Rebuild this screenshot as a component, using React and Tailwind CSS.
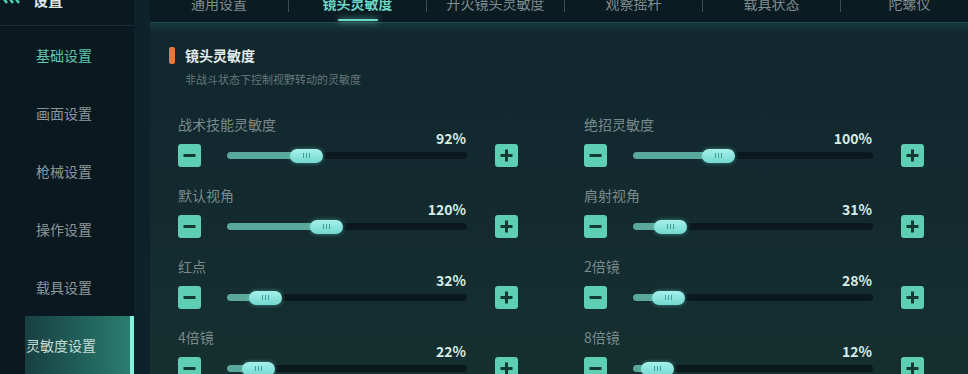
import React from 'react';

const tabs = ['通用设置', '镜头灵敏度', '开火镜头灵敏度', '观察摇杆', '载具状态', '陀螺仪'];
const menu = ['基础设置', '画面设置', '枪械设置', '操作设置', '载具设置', '灵敏度设置'];

const rows = [
    { label: '战术技能灵敏度', value: 92 },
    { label: '绝招灵敏度', value: 100 },
    { label: '默认视角', value: 120 },
    { label: '肩射视角', value: 31 },
    { label: '红点', value: 32 },
    { label: '2倍镜', value: 28 },
    { label: '4倍镜', value: 22 },
    { label: '8倍镜', value: 12 },
];

function StepButton({ plus }) {
    return (
        <button className="flex h-[23px] w-[23px] shrink-0 items-center justify-center rounded-[3px] bg-[#5fcfb3]">
            <svg width="15" height="15" viewBox="0 0 15 15">
                <rect x="1.5" y="6" width="12" height="3" fill="#143a34" />
                {plus && <rect x="6" y="1.5" width="3" height="12" fill="#143a34" />}
            </svg>
        </button>
    );
}

function SliderRow({ label, value }) {
    // thumb travels 207px over a 0-300% range
    const thumbLeft = Math.round((207 * value) / 300);

    return (
        <div className="flex h-[71px] flex-col">
            <div className="text-[14px] leading-[18px] text-[#7a898c]">{label}</div>
            <div className="-mt-[2px] pr-[54px] text-right text-[14px] font-bold leading-[14px] text-[#d6ece7]">
                {value}%
            </div>
            <div className="-mt-[1px] flex h-[23px] items-center">
                <StepButton />
                <div className="relative ml-[26px] h-[7px] w-[240px] rounded-full bg-[#0b191e]">
                    <div
                        className="absolute left-0 top-0 h-[7px] rounded-full bg-[#5aa89b]"
                        style={{ width: thumbLeft + 12 }}
                    />
                    <div
                        className="absolute top-1/2 flex h-[14px] w-[33px] -translate-y-1/2 items-center justify-center gap-[2px] rounded-full bg-[linear-gradient(to_bottom,#a6f1ea,#72d9d1)] shadow-[0_0_4px_rgba(110,230,220,0.5)]"
                        style={{ left: thumbLeft }}
                    >
                        <span className="h-[5px] w-[1px] bg-[#3c9e99]" />
                        <span className="h-[5px] w-[1px] bg-[#3c9e99]" />
                        <span className="h-[5px] w-[1px] bg-[#3c9e99]" />
                    </div>
                </div>
                <div className="ml-[28px]">
                    <StepButton plus />
                </div>
            </div>
        </div>
    );
}

export default function App() {
    return (
        <div
            className="flex h-[374px] w-[968px] overflow-hidden bg-[#0a171e]"
            style={{ fontFamily: '"Noto Sans CJK SC", "Noto Sans", sans-serif' }}
        >
            {/* sidebar */}
            <div className="flex w-[134px] shrink-0 flex-col bg-[#0a1820]">
                <div className="flex h-[31px] items-start border-b border-[#1a2c33]">
                    <svg width="24" height="10" viewBox="0 0 24 10" className="ml-[-2px]">
                        <path d="M2 -6 L9 3 M8 -6 L15 3 M14 -6 L21 3" stroke="#4fd1b6" strokeWidth="2.5" fill="none" />
                    </svg>
                    <span className="-mt-[9px] ml-[11px] text-[15px] font-bold leading-[18px] text-[#dfe8e8]">设置</span>
                </div>
                {menu.map((item, i) => {
                    const active = i === menu.length - 1;
                    return (
                        <div
                            key={item}
                            className={
                                active
                                    ? 'flex h-[58px] shrink-0 items-center justify-center border-r-[4px] border-[#84f2dc] bg-[linear-gradient(to_right,transparent_25px,#173f42_25px,#2a7d6f)] pr-[8px] pt-[1px] text-[14px] text-[#c4dcd6]'
                                    : i === 0
                                        ? 'flex h-[58px] shrink-0 items-center justify-center pr-[6px] pt-[1px] text-[14px] text-[#5fc7ad]'
                                        : 'flex h-[58px] shrink-0 items-center justify-center pr-[6px] pt-[1px] text-[14px] text-[#8a9799]'
                            }
                        >
                            {item}
                        </div>
                    );
                })}
            </div>

            <div className="w-[16px] shrink-0 bg-[#0d222b]" />

            {/* main */}
            <div className="flex min-w-0 flex-1 flex-col">
                <div className="flex h-[22px] shrink-0 bg-[#0b1b22]">
                    {tabs.map((tab, i) => (
                        <div
                            key={tab}
                            className={
                                i === 0
                                    ? 'relative flex w-[138px] shrink-0 justify-center'
                                    : 'relative flex w-[138px] shrink-0 justify-center border-l border-[#34474d] [border-image:linear-gradient(to_bottom,#3a4d53_0,#3a4d53_12px,transparent_12px)_1]'
                            }
                        >
                            <span
                                className={
                                    i === 1
                                        ? '-mt-[4px] text-[14px] font-bold leading-[14px] text-[#6ad6c4]'
                                        : '-mt-[4px] text-[14px] leading-[14px] text-[#7f8d90]'
                                }
                            >
                                {tab}
                            </span>
                            {i === 1 && (
                                <div className="absolute bottom-[1px] left-1/2 h-[2px] w-[40px] -translate-x-1/2 rounded-full bg-[#6fdccb] shadow-[0_0_6px_#6fdccb]" />
                            )}
                        </div>
                    ))}
                </div>

                <div className="flex-1 border-t border-[#1f4a4f] bg-[linear-gradient(to_bottom,#17383d_0px,#11272e_10px,#12292f_120px,#16302f_100%)] pl-[28px] pt-[24px]">
                    <div className="-ml-[9px] flex items-center">
                        <div className="h-[17px] w-[6px] rounded-[2px] bg-[#e5773f]" />
                        <span className="ml-[10px] text-[14px] font-bold leading-[17px] text-[#e3eceb]">镜头灵敏度</span>
                    </div>
                    <div className="ml-[7px] mt-[8px] text-[11px] leading-[14px] text-[#66777a]">
                        非战斗状态下控制视野转动的灵敏度
                    </div>

                    <div className="mt-[29px] grid w-[748px] grid-cols-2 gap-x-[64px]">
                        {rows.map((row) => (
                            <SliderRow key={row.label} label={row.label} value={row.value} />
                        ))}
                    </div>
                </div>
            </div>
        </div>
    );
}
